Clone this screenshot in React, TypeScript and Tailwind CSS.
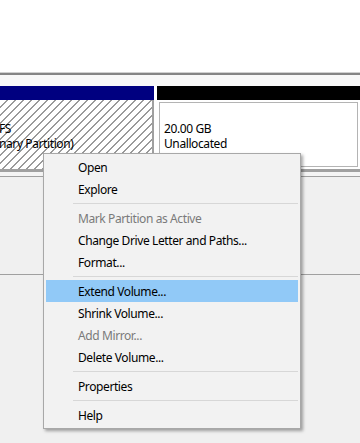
type MenuEntry = { label: string; disabled?: boolean; active?: boolean } | 'sep';

const menu: MenuEntry[] = [
  { label: 'Open' },
  { label: 'Explore' },
  'sep',
  { label: 'Mark Partition as Active', disabled: true },
  { label: 'Change Drive Letter and Paths...' },
  { label: 'Format...' },
  'sep',
  { label: 'Extend Volume...', active: true },
  { label: 'Shrink Volume...' },
  { label: 'Add Mirror...', disabled: true },
  { label: 'Delete Volume...' },
  'sep',
  { label: 'Properties' },
  'sep',
  { label: 'Help' },
];

function ContextMenu() {
  return (
    <div className="absolute left-[43px] top-[153px] w-[258px] border border-[#a8a8a8] bg-[#f2f2f2] py-[2px] shadow-[2px_2px_3px_rgba(0,0,0,0.35)]">
      {menu.map((item, i) =>
        item === 'sep' ? (
          <div key={i} className="flex h-[7px] items-center pl-[29px] pr-[2px]">
            <div className="h-px w-full bg-[#d7d7d7]" />
          </div>
        ) : (
          <div
            key={i}
            className={`mx-[2px] flex h-[22px] items-center pl-[32px] ${
              item.active ? 'bg-[#91c9f7]' : ''
            } ${item.disabled ? 'text-[#7a7a7a]' : 'text-black'}`}
          >
            {item.label}
          </div>
        )
      )}
    </div>
  );
}

export default function App() {
  return (
    <div className="relative h-[443px] w-[360px] overflow-hidden bg-[#f0f0f0] font-['Noto_Sans',sans-serif] text-[12px] leading-[15px] tracking-[-0.4px] text-black">
      {/* volume list area */}
      <div className="h-[72px] bg-white" />
      <div className="h-px bg-[#d0d0d0]" />
      <div className="h-[2px] bg-[#858585]" />
      <div className="h-[11px] bg-[#f8f8f8]" />

      {/* disk row */}
      <div className="flex h-[86px] bg-white">
        <div className="flex w-[154px] flex-col">
          <div className="h-[14px] bg-[#000080]" />
          <div className="flex flex-1 flex-col border-r-2 border-b-[3px] border-[#a0a0a0] bg-[repeating-linear-gradient(135deg,#ffffff_0px,#ffffff_4.6px,#9a9a9a_4.6px,#9a9a9a_5.66px)] pt-[21px]">
            <span className="-ml-px">FS</span>
            <span className="-ml-px">nary Partition)</span>
          </div>
        </div>
        <div className="w-[3px] bg-white" />
        <div className="flex flex-1 flex-col">
          <div className="h-[14px] bg-black" />
          <div className="flex flex-1 flex-col border-b-[3px] border-[#a0a0a0] p-[2px]">
            <div className="flex flex-1 flex-col border border-[#b4b4b4] bg-white pl-[4px] pt-[18px]">
              <span>20.00 GB</span>
              <span>Unallocated</span>
            </div>
          </div>
        </div>
      </div>
      <div className="h-[4px] bg-[#f4f4f4]" />
      <div className="h-px bg-[#a0a0a0]" />

      {/* next disk row */}
      <div className="h-[98px] border-b border-[#a0a0a0]" />

      <ContextMenu />
    </div>
  );
}
